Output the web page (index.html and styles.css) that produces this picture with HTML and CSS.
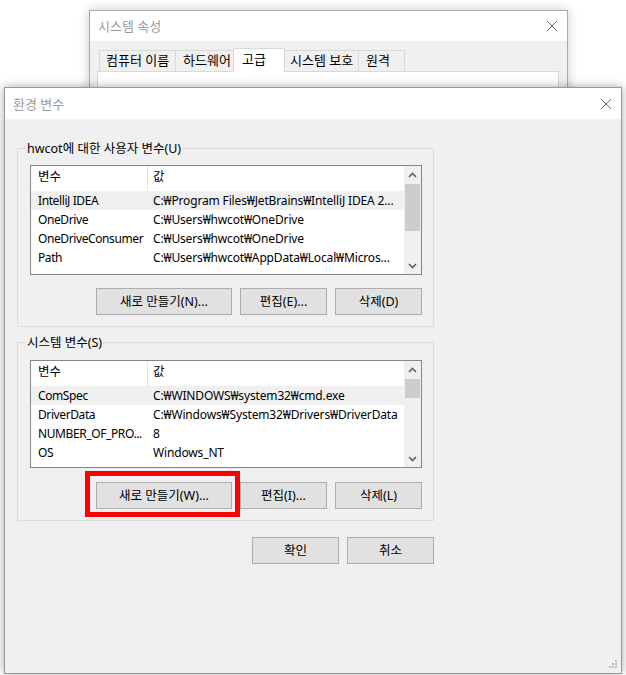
FILE: index.html
```html
<!DOCTYPE html>
<html lang="ko">
<head>
<meta charset="utf-8">
<title>환경 변수</title>
<link rel="stylesheet" href="styles.css">
</head>
<body>
<div class="desktop">
  <div class="win back">
    <div class="titlebar">
      <span class="title">시스템 속성</span>
      <svg class="close" width="12" height="12" viewBox="0 0 12 12"><path d="M1 1L11 11M11 1L1 11" stroke="#707070" stroke-width="1" fill="none"/></svg>
    </div>
    <div class="back-body">
      <div class="tabs">
        <div class="tab tab-1">컴퓨터 이름</div>
        <div class="tab tab-2">하드웨어</div>
        <div class="tab tab-3 active">고급</div>
        <div class="tab tab-4">시스템 보호</div>
        <div class="tab tab-5">원격</div>
      </div>
      <div class="panel"></div>
    </div>
  </div>

  <div class="win front">
    <div class="titlebar">
      <span class="title">환경 변수</span>
      <svg class="close" width="12" height="12" viewBox="0 0 12 12"><path d="M1 1L11 11M11 1L1 11" stroke="#707070" stroke-width="1" fill="none"/></svg>
    </div>
    <div class="body">
      <div class="group group-user">
        <div class="legend">hwcot에 대한 사용자 변수(U)</div>
        <div class="list list-user">
          <div class="list-main">
            <div class="row head"><span class="c1">변수</span><span class="c2">값</span></div>
            <div class="row sel"><span class="c1">IntelliJ IDEA</span><span class="c2">C:₩Program Files₩JetBrains₩IntelliJ IDEA 2...</span></div>
            <div class="row"><span class="c1">OneDrive</span><span class="c2">C:₩Users₩hwcot₩OneDrive</span></div>
            <div class="row"><span class="c1">OneDriveConsumer</span><span class="c2">C:₩Users₩hwcot₩OneDrive</span></div>
            <div class="row"><span class="c1">Path</span><span class="c2">C:₩Users₩hwcot₩AppData₩Local₩Micros...</span></div>
          </div>
          <div class="scrollbar">
            <div class="arrow"><svg width="9" height="6" viewBox="0 0 9 6"><path d="M1 5L4.5 1.5L8 5" stroke="#606060" stroke-width="1.6" fill="none"/></svg></div>
            <div class="track"><div class="thumb thumb-user"></div></div>
            <div class="arrow"><svg width="9" height="6" viewBox="0 0 9 6"><path d="M1 1L4.5 4.5L8 1" stroke="#606060" stroke-width="1.6" fill="none"/></svg></div>
          </div>
        </div>
        <div class="btns">
          <button class="btn btn-wide">새로 만들기(N)...</button>
          <button class="btn">편집(E)...</button>
          <button class="btn">삭제(D)</button>
        </div>
      </div>

      <div class="group group-sys">
        <div class="legend">시스템 변수(S)</div>
        <div class="list list-sys">
          <div class="list-main">
            <div class="row head"><span class="c1">변수</span><span class="c2">값</span></div>
            <div class="row sel"><span class="c1">ComSpec</span><span class="c2">C:₩WINDOWS₩system32₩cmd.exe</span></div>
            <div class="row"><span class="c1">DriverData</span><span class="c2">C:₩Windows₩System32₩Drivers₩DriverData</span></div>
            <div class="row"><span class="c1">NUMBER_OF_PRO...</span><span class="c2">8</span></div>
            <div class="row"><span class="c1">OS</span><span class="c2">Windows_NT</span></div>
          </div>
          <div class="scrollbar">
            <div class="arrow"><svg width="9" height="6" viewBox="0 0 9 6"><path d="M1 5L4.5 1.5L8 5" stroke="#606060" stroke-width="1.6" fill="none"/></svg></div>
            <div class="track"><div class="thumb thumb-sys"></div></div>
            <div class="arrow"><svg width="9" height="6" viewBox="0 0 9 6"><path d="M1 1L4.5 4.5L8 1" stroke="#606060" stroke-width="1.6" fill="none"/></svg></div>
          </div>
        </div>
        <div class="btns">
          <span class="hl"><button class="btn btn-wide">새로 만들기(W)...</button></span>
          <button class="btn">편집(I)...</button>
          <button class="btn">삭제(L)</button>
        </div>
      </div>

      <div class="btns footer">
        <button class="btn">확인</button>
        <button class="btn">취소</button>
      </div>
    </div>
    <svg class="grip" width="10" height="10" viewBox="0 0 10 10" fill="#bcbcbc">
      <rect x="7" y="0" width="2" height="2"/>
      <rect x="4" y="3" width="2" height="2"/><rect x="7" y="3" width="2" height="2"/>
      <rect x="1" y="6" width="2" height="2"/><rect x="4" y="6" width="2" height="2"/><rect x="7" y="6" width="2" height="2"/>
    </svg>
  </div>
</div>
</body>
</html>
```

FILE: styles.css
```css
* { box-sizing: border-box; }
html, body {
  margin: 0;
  padding: 0;
  background: #ffffff;
}
body {
  width: 626px;
  height: 675px;
  overflow: hidden;
  font-family: "Noto Sans", "Noto Sans CJK KR", sans-serif;
  font-size: 12px;
  color: #000;
}
.desktop {
  position: relative;
  width: 626px;
  height: 675px;
}
.win {
  position: absolute;
  background: #f0f0f0;
  border: 1px solid #aaaaaa;
  display: flex;
  flex-direction: column;
}
.back {
  left: 89px;
  top: 10px;
  width: 479px;
  height: 200px;
  box-shadow: 0 0 10px rgba(0,0,0,0.22);
}
.front {
  left: 4px;
  top: 87px;
  width: 618px;
  height: 587px;
  border-color: #9a9a9a;
  box-shadow: 0 0 9px rgba(0,0,0,0.35);
}
.titlebar {
  height: 31px;
  flex: none;
  background: #fff;
  display: flex;
  align-items: center;
  justify-content: space-between;
  padding: 0 9px 0 8px;
}
.title {
  color: #9c9c9c;
  font-size: 13px;
  line-height: 16px;
}
.back .titlebar { height: 30px; }
.close { display: block; }

/* back window tabs */
.back-body {
  padding: 8px 8px 0 7px;
}
.tabs {
  display: flex;
  align-items: flex-end;
  height: 22px;
  padding-left: 3px;
  position: relative;
  z-index: 1;
}
.tab {
  height: 21px;
  padding: 0 0 0 6px;
  border: 1px solid #d9d9d9;
  border-bottom: none;
  margin-left: -1px;
  background: #f0f0f0;
  line-height: 19px;
  font-size: 13px;
  white-space: nowrap;
}
.tab-1 { width: 77px; }
.tab-2 { width: 59px; padding-left: 7px; }
.tab-3 { width: 52px; }
.tab-4 { width: 75px; padding-left: 5px; }
.tab-5 { width: 47px; padding-left: 7px; }
.tab.active {
  height: 24px;
  background: #fff;
  padding-left: 8px;
  margin-bottom: -1px;
  line-height: 20px;
}
.panel {
  height: 40px;
  background: #fff;
  border: 1px solid #d9d9d9;
  width: 462px;
}

/* front window body */
.body {
  flex: 1;
  padding: 29px 0 0 12px;
  display: flex;
  flex-direction: column;
}
.group {
  width: 417px;
  border: 1px solid #dcdcdc;
  padding: 0 11px 11px 12px;
}
.group-sys { margin-top: 15px; }
.legend {
  width: fit-content;
  margin: -8px 0 0 -5px;
  padding: 0 1px 0 2px;
  background: #f0f0f0;
  line-height: 16px;
  font-size: 12.5px;
}
.list {
  margin-top: 8px;
  width: 392px;
  height: 110px;
  border: 1px solid #828790;
  background: #fff;
  display: flex;
}
.list-sys { margin-top: 9px; height: 108px; }
.list-main {
  flex: 1;
  overflow: hidden;
}
.row {
  display: flex;
  height: 19px;
  line-height: 19px;
  white-space: nowrap;
}
.row.head {
  height: 25px;
  line-height: 22px;
}
.row.sel { background: #f0f0f0; }
.c1 {
  width: 117px;
  flex: none;
  padding-left: 7px;
  overflow: hidden;
  letter-spacing: -0.4px;
}
.c2 {
  padding-left: 5px;
  letter-spacing: -0.15px;
}
.head .c1, .head .c2 { letter-spacing: 0; font-size: 12.5px; }
.head .c1 { border-right: 1px solid #e5e5e5; }
.scrollbar {
  width: 17px;
  flex: none;
  background: #f0f0f0;
  display: flex;
  flex-direction: column;
}
.arrow {
  height: 17px;
  flex: none;
  display: flex;
  align-items: center;
  justify-content: center;
}
.track {
  flex: 1;
  padding: 1px 1px 0 1px;
}
.thumb { background: #cdcdcd; }
.thumb-user { height: 47px; }
.thumb-sys { height: 19px; }

.btns {
  display: flex;
  justify-content: flex-end;
  gap: 8px;
  margin-top: 13px;
  width: 392px;
}
.group-sys .btns { margin-top: 14px; }
.btn {
  font-family: inherit;
  font-size: 12.5px;
  color: #000;
  width: 87px;
  height: 27px;
  padding: 0;
  background: #e1e1e1;
  border: 1px solid #adadad;
  border-radius: 0;
  line-height: 25px;
}
.btn-wide { width: 136px; }
.hl {
  position: relative;
  display: block;
}
.hl .btn { display: block; }
.hl::after {
  content: "";
  position: absolute;
  left: -11px;
  top: -11px;
  right: -8px;
  bottom: -8px;
  border: 5px solid #ff0000;
}
.footer {
  width: 417px;
  margin-top: 16px;
}
.grip {
  position: absolute;
  right: 3px;
  bottom: 3px;
}
```
